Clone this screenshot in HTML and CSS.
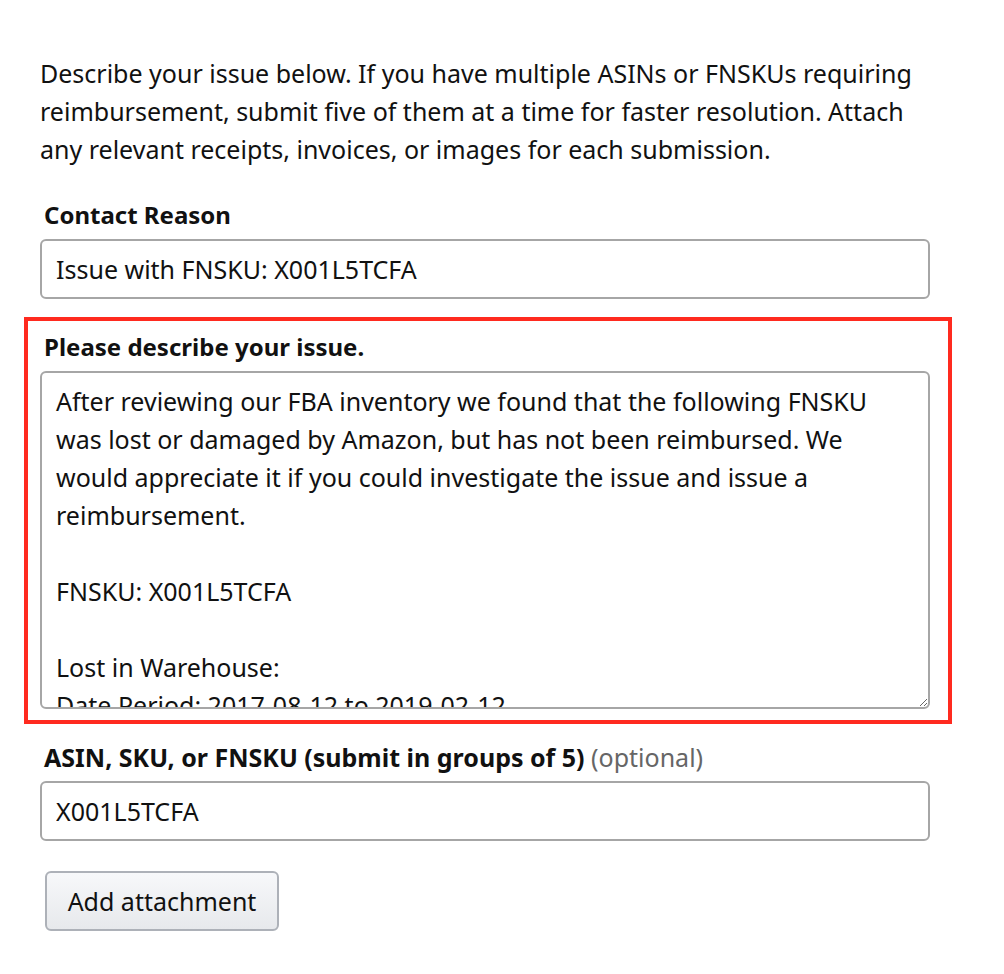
FILE: index.html
```
<!DOCTYPE html>
<html lang="en">
  <head>
    <meta charset="UTF-8" />
    <meta name="viewport" content="width=device-width, initial-scale=1.0" />
    <title>Contact Seller Support</title>
    <link rel="stylesheet" href="styles.css">
  </head>
  <body>
    <form class="case-form">
      <p class="intro">
        Describe your issue below. If you have multiple ASINs or FNSKUs requiring
        reimbursement, submit five of them at a time for faster resolution. Attach
        any relevant receipts, invoices, or images for each submission.
      </p>

      <div class="field">
        <label for="contact-reason">Contact Reason</label>
        <input id="contact-reason" type="text" value="Issue with FNSKU: X001L5TCFA" />
      </div>

      <!-- highlighted part -->
      <div class="field highlight">
        <label for="issue">Please describe your issue.</label>
        <textarea id="issue">After reviewing our FBA inventory we found that the following FNSKU was lost or damaged by Amazon, but has not been reimbursed. We would appreciate it if you could investigate the issue and issue a reimbursement.

FNSKU: X001L5TCFA

Lost in Warehouse:
Date Period: 2017-08-12 to 2019-02-12
Units lost: 1</textarea>
      </div>

      <div class="field field-asin">
        <label for="asin">ASIN, SKU, or FNSKU (submit in groups of 5) <span class="optional">(optional)</span></label>
        <input id="asin" type="text" value="X001L5TCFA" />
      </div>

      <button type="button" class="attach-btn">Add attachment</button>
    </form>
  </body>
</html>
```
FILE: styles.css
```
* {
  margin: 0;
  padding: 0;
  box-sizing: border-box;
}

body {
  background: #fff;
  color: #111;
  font-family: "Noto Sans", "Open Sans", sans-serif;
  font-size: 25px;
  line-height: 38px;
}

.case-form {
  width: 930px;
  padding: 54px 0 40px 40px;
  display: flex;
  flex-direction: column;
}

.intro {
  margin-bottom: 28px;
}

.field {
  display: flex;
  flex-direction: column;
  gap: 5px;
}

.field label {
  height: 38px;
  padding-left: 4px;
  font-size: 24px;
  font-weight: 700;
}

.optional {
  font-weight: 400;
  color: #666;
}

.field input,
.field textarea {
  width: 100%;
  border: 2px solid #a6a6a6;
  border-radius: 6px;
  font-family: inherit;
  font-size: 25px;
  color: #111;
  background: #fff;
  outline: none;
}

.field input {
  height: 60px;
  padding: 0 14px;
}

.field textarea {
  height: 338px;
  padding: 9px 14px;
  line-height: 38px;
  overflow: hidden;
  resize: vertical;
}

.highlight {
  margin: 18px -22px 0 -16px;
  padding: 7px 18px 11px 12px;
  border: 4px solid #ff2a1f;
}

.field-asin {
  margin-top: 14px;
}

.field-asin label {
  font-size: 25px;
}

.attach-btn {
  align-self: flex-start;
  margin: 30px 0 0 5px;
  width: 234px;
  height: 60px;
  border: 2px solid #adb1b8;
  border-radius: 6px;
  background: linear-gradient(#f7f8fa, #e7e9ec);
  font-family: inherit;
  font-size: 25px;
  color: #111;
}
```
